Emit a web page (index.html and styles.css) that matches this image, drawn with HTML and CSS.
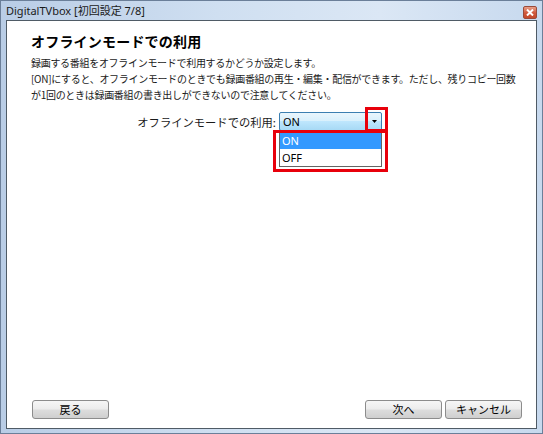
FILE: index.html
```html
<!DOCTYPE html>
<html lang="ja">
<head>
<meta charset="utf-8">
<link rel="stylesheet" href="styles.css">
</head>
<body>
<div class="window">
  <div class="titlebar">
    <span class="title">DigitalTVbox [初回設定 7/8]</span>
    <span class="close"><svg width="8" height="7" viewBox="0 0 8 7"><path d="M1 0.5 L7 6.5 M7 0.5 L1 6.5" stroke="#fff" stroke-width="2"/></svg></span>
  </div>
  <div class="content">
    <h1 class="heading">オフラインモードでの利用</h1>
    <p class="desc">録画する番組をオフラインモードで利用するかどうか設定します。<br>[ON]にすると、オフラインモードのときでも録画番組の再生・編集・配信ができます。ただし、残りコピー回数<br>が1回のときは録画番組の書き出しができないので注意してください。</p>
    <div class="form-row">
      <span class="label">オフラインモードでの利用:</span>
      <div class="select-wrap">
        <div class="select">
          <span class="value">ON</span>
          <span class="arrow"><svg width="5" height="3" viewBox="0 0 5 3"><path d="M0 0 H5 L2.5 3 Z" fill="#000"/></svg></span>
        </div>
        <div class="listbox">
          <div class="option selected">ON</div>
          <div class="option">OFF</div>
        </div>
        <div class="mark mark-arrow"></div>
        <div class="mark mark-list"></div>
      </div>
    </div>
    <div class="buttons">
      <button class="btn">戻る</button>
      <div class="right-buttons">
        <button class="btn">次へ</button>
        <button class="btn">キャンセル</button>
      </div>
    </div>
  </div>
</div>
</body>
</html>
```
FILE: styles.css
```css
html, body {
  margin: 0;
  padding: 0;
}
body {
  width: 543px;
  height: 434px;
  overflow: hidden;
  font-family: "Noto Sans CJK JP", "Noto Sans", sans-serif;
}
.window {
  width: 543px;
  height: 434px;
  display: flex;
  flex-direction: column;
  background: linear-gradient(90deg, #b9cde6 0%, #cfdff1 40%, #dbe7f5 70%, #c7d9ee 100%);
  box-sizing: border-box;
  border: 1px solid #6b7f99;
}
.titlebar {
  height: 19px;
  display: flex;
  align-items: center;
  justify-content: space-between;
  padding: 0 5px 0 5px;
}
.title {
  font-family: "Noto Sans", "Noto Sans CJK JP", sans-serif;
  font-size: 11px;
  color: #1a1a1a;
  line-height: 14px;
}
.close {
  width: 14px;
  height: 13px;
  margin-top: 4px;
  border: 1px solid #9a4a3a;
  border-radius: 2px;
  box-sizing: border-box;
  background: linear-gradient(#e8a08a, #d0573a 55%, #c44a2c);
  display: flex;
  align-items: center;
  justify-content: center;
}
.content {
  flex: 1;
  margin: 0 5px 4px 5px;
  background: #fff;
  border: 1px solid #4f5b66;
  display: flex;
  flex-direction: column;
  padding: 11px 14px 9px 24px;
}
.heading {
  margin: 0;
  font-size: 14px;
  line-height: 18px;
  font-weight: bold;
  letter-spacing: 0.2px;
  color: #000;
}
.desc {
  margin: 5px 0 0 0;
  font-size: 10px;
  line-height: 16px;
  color: #1a1a1a;
  letter-spacing: -0.3px;
  white-space: nowrap;
}
.form-row {
  display: flex;
  align-items: center;
  margin-top: 9px;
}
.label {
  width: 245px;
  text-align: right;
  font-size: 11.3px;
  color: #1a1a1a;
  margin-right: 3px;
}
.select-wrap {
  position: relative;
}
.select {
  width: 103px;
  height: 19px;
  box-sizing: border-box;
  border: 1px solid #3c7fb1;
  border-radius: 2px;
  background: linear-gradient(#eaf6fd 0%, #d9f0fc 45%, #bee6fd 50%, #a7d9f5 100%);
  display: flex;
  align-items: center;
  justify-content: space-between;
}
.value {
  font-family: "Noto Sans", sans-serif;
  font-size: 11px;
  padding-left: 3px;
  color: #000;
}
.arrow {
  width: 14px;
  height: 17px;
  display: flex;
  align-items: center;
  justify-content: center;
  border-left: 1px solid #8cb8d6;
}
.listbox {
  position: absolute;
  left: 0;
  top: 19px;
  width: 103px;
  box-sizing: border-box;
  border: 1px solid #646464;
  background: #fff;
  padding: 0;
}
.option {
  font-family: "Noto Sans", sans-serif;
  font-size: 11px;
  height: 17px;
  line-height: 17px;
  padding-left: 2px;
  color: #000;
}
.option.selected {
  background: #3399ff;
  color: #fff;
}
.mark {
  position: absolute;
  border: 3px solid #e8000b;
  box-sizing: border-box;
}
.mark-arrow {
  left: 86px;
  top: -5px;
  width: 23px;
  height: 25px;
}
.mark-list {
  left: -6px;
  top: 18px;
  width: 115px;
  height: 42px;
}
.buttons {
  margin-top: auto;
  display: flex;
  justify-content: space-between;
  padding-left: 1px;
}
.right-buttons {
  display: flex;
  gap: 3px;
}
.btn {
  width: 77px;
  height: 19px;
  box-sizing: border-box;
  border: 1px solid #8c8c8c;
  border-radius: 3px;
  background: linear-gradient(#f6f6f6 0%, #ececec 48%, #dddddd 52%, #cfcfcf 100%);
  font-family: "Noto Sans CJK JP", sans-serif;
  font-size: 11px;
  color: #000;
  padding: 0;
  line-height: 17px;
}
```
